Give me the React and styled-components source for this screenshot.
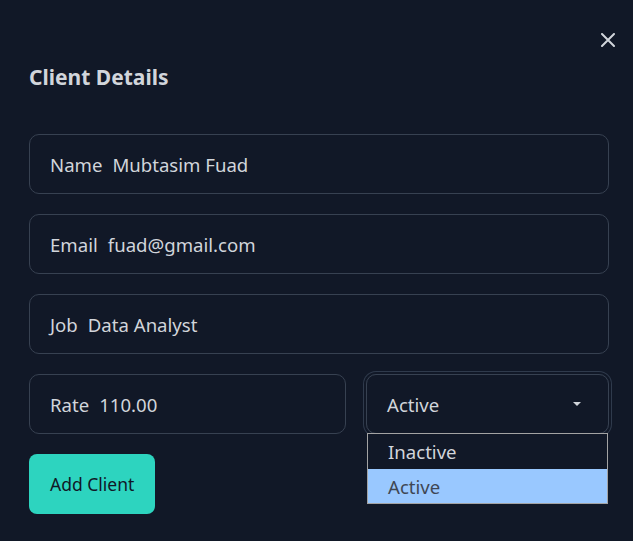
import React from "react";
import styled, { createGlobalStyle } from "styled-components";

const Global = createGlobalStyle`
  html, body { margin: 0; padding: 0; background: #111827; }
  body { font-family: "Noto Sans", "Open Sans", sans-serif; }
  * { box-sizing: border-box; }
`;

const Modal = styled.div`
  position: relative;
  width: 633px;
  height: 541px;
  background: #111827;
  padding: 62px 24px 0 29px;
`;

const CloseButton = styled.button`
  position: absolute;
  top: 31px;
  right: 16px;
  width: 18px;
  height: 18px;
  padding: 0;
  border: none;
  background: transparent;
  display: flex;
  align-items: center;
  justify-content: center;
  cursor: pointer;
`;

const Title = styled.h2`
  margin: 0 0 42px;
  font-size: 21px;
  line-height: 30px;
  font-weight: 700;
  color: #d1d5db;
`;

const Form = styled.form`
  display: flex;
  flex-direction: column;
  gap: 20px;
  width: 580px;
`;

const Field = styled.div`
  height: 60px;
  border: 1px solid #374151;
  border-radius: 10px;
  padding: 0 20px;
  display: flex;
  align-items: center;
  gap: 10px;
  font-size: 18.6px;
  color: #d1d5db;
`;

const Row = styled.div`
  display: grid;
  grid-template-columns: 317px 243px;
  gap: 20px;
`;

const SelectWrap = styled.div`
  position: relative;
`;

const SelectBox = styled.div`
  height: 60px;
  border: 1px solid #374151;
  border-radius: 10px;
  box-shadow: 0 0 0 2px #111827, 0 0 0 3px #2f3a4c;
  padding: 0 27px 0 20px;
  display: flex;
  align-items: center;
  justify-content: space-between;
  font-size: 18.6px;
  color: #d1d5db;
`;

const Caret = styled.span`
  width: 0;
  height: 0;
  border-left: 4px solid transparent;
  border-right: 4px solid transparent;
  border-top: 4px solid #d1d5db;
`;

const Options = styled.ul`
  position: absolute;
  top: 59px;
  left: 1px;
  width: 241px;
  margin: 0;
  padding: 0;
  list-style: none;
  border: 1px solid #a3a3a3;
  background: #111827;
`;

const Option = styled.li`
  height: ${(p) => (p.$first ? "35px" : "34px")};
  padding-left: 20px;
  display: flex;
  align-items: center;
  font-size: 18.6px;
  color: ${(p) => (p.$selected ? "#3f4754" : "#d1d5db")};
  background: ${(p) => (p.$selected ? "#99c8ff" : "transparent")};
`;

const Button = styled.button`
  align-self: flex-start;
  height: 60px;
  padding: 0 21px;
  border: none;
  border-radius: 8px;
  background: #2dd4bf;
  color: #111827;
  font-family: inherit;
  font-size: 17.5px;
  cursor: pointer;
`;

export default function App() {
  return (
    <>
      <Global />
      <Modal>
        <CloseButton aria-label="Close">
          <svg width="14" height="14" viewBox="0 0 14 14">
            <path d="M1 1L13 13M13 1L1 13" stroke="#d1d5db" strokeWidth="2" strokeLinecap="round" />
          </svg>
        </CloseButton>
        <Title>Client Details</Title>
        <Form>
          <Field><span>Name</span><span>Mubtasim Fuad</span></Field>
          <Field><span>Email</span><span>fuad@gmail.com</span></Field>
          <Field><span>Job</span><span>Data Analyst</span></Field>
          <Row>
            <Field><span>Rate</span><span>110.00</span></Field>
            <SelectWrap>
              <SelectBox>
                <span>Active</span>
                <Caret />
              </SelectBox>
              <Options>
                <Option $first>Inactive</Option>
                <Option $selected>Active</Option>
              </Options>
            </SelectWrap>
          </Row>
          <Button type="button">Add Client</Button>
        </Form>
      </Modal>
    </>
  );
}
